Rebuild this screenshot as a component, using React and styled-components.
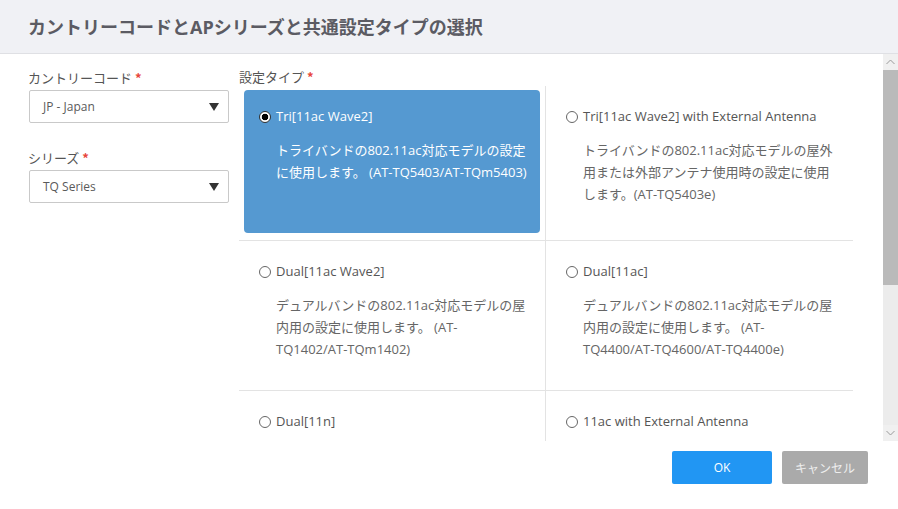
import React from "react";
import styled, { createGlobalStyle } from "styled-components";

const Global = createGlobalStyle`
  html, body { margin: 0; padding: 0; background: #fff; }
  body { font-family: "Open Sans", "Noto Sans CJK JP", sans-serif; }
  * { box-sizing: border-box; }
`;

const Dialog = styled.div`
  width: 898px;
  height: 509px;
  display: flex;
  flex-direction: column;
  background: #fff;
  overflow: hidden;
`;

const Header = styled.div`
  height: 54px;
  flex: none;
  background: #f0f1f5;
  border-bottom: 1px solid #dfe0e4;
  display: flex;
  align-items: center;
  padding: 0 0 2px 28px;
`;

const Title = styled.h1`
  margin: 0;
  font-size: 18px;
  font-weight: 700;
  color: #5b5b63;
  letter-spacing: 0;
`;

const Body = styled.div`
  height: 387px;
  flex: none;
  display: flex;
`;

const Content = styled.div`
  flex: 1;
  overflow: hidden;
  display: flex;
  padding: 14px 30px 0 29px;
  gap: 10px;
`;

const LeftCol = styled.div`
  width: 200px;
  flex: none;
  display: flex;
  flex-direction: column;
`;

const Field = styled.div`
  display: flex;
  flex-direction: column;
  margin-bottom: 25px;
`;

const Label = styled.div`
  font-size: 13px;
  line-height: 20px;
  color: #555;
  margin: 0 0 2px -1px;
  font-family: "Noto Sans CJK JP", sans-serif;
  font-weight: 400;
`;

const Req = styled.span`
  color: #e8473b;
  font-weight: 700;
  margin-left: 3px;
`;

const Select = styled.div`
  height: 33px;
  border: 1px solid #c9c9c9;
  border-radius: 2px;
  display: flex;
  align-items: center;
  justify-content: space-between;
  padding: 0 9px 0 13px;
  font-size: 12px;
  color: #5a5a5a;
`;

const Caret = styled.span`
  width: 0;
  height: 0;
  border-left: 5px solid transparent;
  border-right: 5px solid transparent;
  border-top: 8px solid #333;
  margin-top: 1px;
`;

const RightCol = styled.div`
  flex: 1;
  display: flex;
  flex-direction: column;
`;

const TypeLabel = styled(Label)`
  line-height: 18px;
  margin: 0 0 0 0;
`;

const Grid = styled.div`
  display: grid;
  grid-template-columns: 307px 307px;
  grid-template-rows: 155px 150px 150px;
  width: 614px;
`;

const Cell = styled.div`
  border-bottom: 1px solid #e3e3e3;
  border-right: ${(p) => (p.$left ? "1px solid #e3e3e3" : "none")};
  padding: ${(p) => (p.$first ? "4px 5px 7px 5px" : "0")};
  display: flex;
`;

const Option = styled.div`
  flex: 1;
  border-radius: 4px;
  background: ${(p) => (p.$selected ? "#5599d1" : "transparent")};
  color: ${(p) => (p.$selected ? "#fff" : "#555")};
  padding: ${(p) => (p.$inset ? "16px 10px 0 15px" : "20px 10px 0 20px")};
`;

const OptionTitle = styled.div`
  display: flex;
  align-items: center;
  height: 20px;
  font-size: 13px;
  gap: 5px;
`;

const Radio = styled.span`
  width: 12px;
  height: 12px;
  border-radius: 50%;
  flex: none;
  border: 1px solid ${(p) => (p.$checked ? "#333" : "#666")};
  background: ${(p) => (p.$checked ? "radial-gradient(circle, #000 0 3px, #fff 3.6px)" : "#fff")};
  margin-top: 1px;
`;

const Desc = styled.div`
  margin: 13px 0 0 17px;
  width: 252px;
  font-size: 13px;
  line-height: 22px;
  color: ${(p) => (p.$selected ? "#fff" : "#666")};
`;

const Scrollbar = styled.div`
  width: 15px;
  flex: none;
  display: flex;
  flex-direction: column;
  background: #ececec;
`;

const ScrollBtn = styled.div`
  height: 16px;
  flex: none;
  display: flex;
  align-items: center;
  justify-content: center;
  background: #f0f0f0;
`;

const Thumb = styled.div`
  height: 215px;
  flex: none;
  background: #bababa;
`;

const Track = styled.div`
  flex: 1;
`;

const Footer = styled.div`
  flex: 1;
  display: flex;
  justify-content: flex-end;
  align-items: flex-start;
  padding: 10px 30px 0 0;
  gap: 10px;
`;

const Button = styled.button`
  height: 33px;
  width: ${(p) => p.$w}px;
  border: none;
  border-radius: 2px;
  background: ${(p) => (p.$primary ? "#2196f3" : "#aaaaaa")};
  color: ${(p) => (p.$primary ? "#fff" : "#eeeeee")};
  font-family: "Open Sans", "Noto Sans CJK JP", sans-serif;
  font-size: 12px;
  padding: 0;
`;

const options = [
  {
    title: "Tri[11ac Wave2]",
    desc: "トライバンドの802.11ac対応モデルの設定に使用します。 (AT-TQ5403/AT-TQm5403)",
    selected: true,
  },
  {
    title: "Tri[11ac Wave2] with External Antenna",
    desc: "トライバンドの802.11ac対応モデルの屋外用または外部アンテナ使用時の設定に使用します。(AT-TQ5403e)",
  },
  {
    title: "Dual[11ac Wave2]",
    desc: "デュアルバンドの802.11ac対応モデルの屋内用の設定に使用します。 (AT-TQ1402/AT-TQm1402)",
  },
  {
    title: "Dual[11ac]",
    desc: "デュアルバンドの802.11ac対応モデルの屋内用の設定に使用します。 (AT-TQ4400/AT-TQ4600/AT-TQ4400e)",
  },
  { title: "Dual[11n]", desc: "" },
  { title: "11ac with External Antenna", desc: "" },
];

const Chevron = ({ up }) => (
  <svg width="9" height="6" viewBox="0 0 9 6">
    <path
      d={up ? "M0.5 5 L4.5 1 L8.5 5" : "M0.5 1 L4.5 5 L8.5 1"}
      fill="none"
      stroke="#9a9a9a"
      strokeWidth="1"
    />
  </svg>
);

export default function App() {
  return (
    <>
      <Global />
      <Dialog>
        <Header>
          <Title>カントリーコードとAPシリーズと共通設定タイプの選択</Title>
        </Header>
        <Body>
          <Content>
            <LeftCol>
              <Field>
                <Label>
                  カントリーコード<Req>*</Req>
                </Label>
                <Select>
                  <span>JP - Japan</span>
                  <Caret />
                </Select>
              </Field>
              <Field>
                <Label>
                  シリーズ<Req>*</Req>
                </Label>
                <Select>
                  <span>TQ Series</span>
                  <Caret />
                </Select>
              </Field>
            </LeftCol>
            <RightCol>
              <TypeLabel>
                設定タイプ<Req>*</Req>
              </TypeLabel>
              <Grid>
                {options.map((o, i) => (
                  <Cell key={o.title} $left={i % 2 === 0} $first={i === 0}>
                    <Option $selected={o.selected} $inset={i === 0}>
                      <OptionTitle>
                        <Radio $checked={o.selected} />
                        <span>{o.title}</span>
                      </OptionTitle>
                      {o.desc && <Desc $selected={o.selected}>{o.desc}</Desc>}
                    </Option>
                  </Cell>
                ))}
              </Grid>
            </RightCol>
          </Content>
          <Scrollbar>
            <ScrollBtn>
              <Chevron up />
            </ScrollBtn>
            <Thumb />
            <Track />
            <ScrollBtn>
              <Chevron />
            </ScrollBtn>
          </Scrollbar>
        </Body>
        <Footer>
          <Button $primary $w={100}>OK</Button>
          <Button $w={86}>キャンセル</Button>
        </Footer>
      </Dialog>
    </>
  );
}
